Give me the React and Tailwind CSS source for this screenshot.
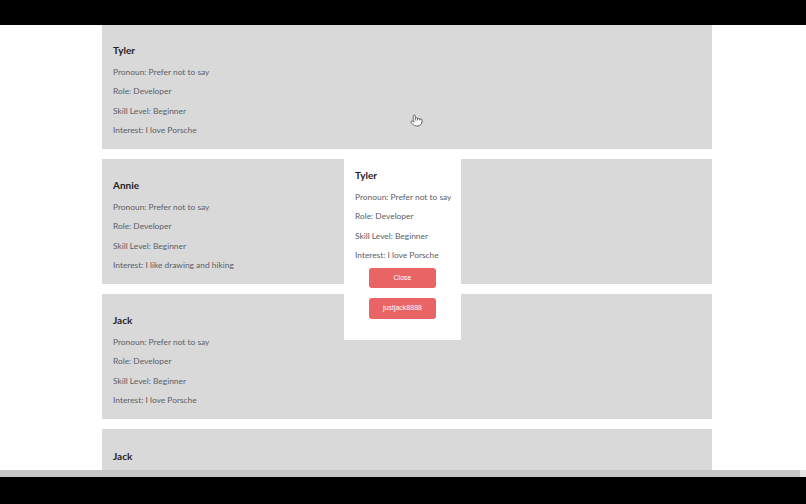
import React from 'react';
import { Pointer } from 'lucide-react';

const people = [
  { name: 'Tyler', interest: 'I love Porsche' },
  { name: 'Annie', interest: 'I like drawing and hiking' },
  { name: 'Jack', interest: 'I love Porsche' },
];

const Details = ({ person }) => (
  <>
    <h2 className="text-[10px] leading-[20px] font-bold text-[#1f2226]">{person.name}</h2>
    <div className="mt-[2.5px] text-[8.4px] leading-[19.5px] text-[#5c6066] whitespace-nowrap">
      <p>Pronoun: Prefer not to say</p>
      <p>Role: Developer</p>
      <p>Skill Level: Beginner</p>
      <p>Interest: {person.interest}</p>
    </div>
  </>
);

export default function App() {
  return (
    <div className="w-[806px] h-[504px] bg-black flex flex-col" style={{ fontFamily: 'Lato, "Open Sans", sans-serif' }}>
      <div className="h-[25px] shrink-0" />

      {/* viewport */}
      <div className="relative h-[445px] shrink-0 bg-white overflow-hidden">
        <div className="flex flex-col gap-[10.5px] -mt-[1px] ml-[102px] w-[610px]">
          {people.map((p, i) => (
            <div key={i} className="bg-[#d9d9d9] h-[124.5px] pt-[16px] px-[11px]">
              <Details person={p} />
            </div>
          ))}
          {/* next card, only its heading is in view */}
          <div className="bg-[#d9d9d9] h-[42px] pt-[17px] px-[11px]">
            <h2 className="text-[10px] leading-[20px] font-bold text-[#1f2226]">Jack</h2>
          </div>
        </div>

        {/* popup */}
        <div className="absolute left-[344px] top-[133px] w-[117px] bg-white pt-[7px] pb-[21px] px-[11px]">
          <Details person={people[0]} />
          <div className="mt-[2.5px] flex flex-col items-center gap-[10px]">
            <button className="w-[67px] h-[20px] rounded-[3px] bg-[#e96464] text-white text-[7px]" style={{ fontFamily: '"Liberation Sans", Arial, sans-serif' }}>
              Close
            </button>
            <button className="w-[67px] h-[21px] rounded-[3px] bg-[#e96464] text-white text-[7px]" style={{ fontFamily: '"Liberation Sans", Arial, sans-serif' }}>
              justjack8888
            </button>
          </div>
        </div>

        {/* cursor */}
        <Pointer className="absolute left-[410px] top-[89px] w-[13px] h-[13px] text-[#555] fill-white" strokeWidth={1.6} />
      </div>

      {/* horizontal scrollbar */}
      <div className="h-[7px] shrink-0 bg-[#e6e6e6] flex">
        <div className="w-[800px] bg-[#c6c6c6]" />
      </div>
      <div className="flex-1" />
    </div>
  );
}
